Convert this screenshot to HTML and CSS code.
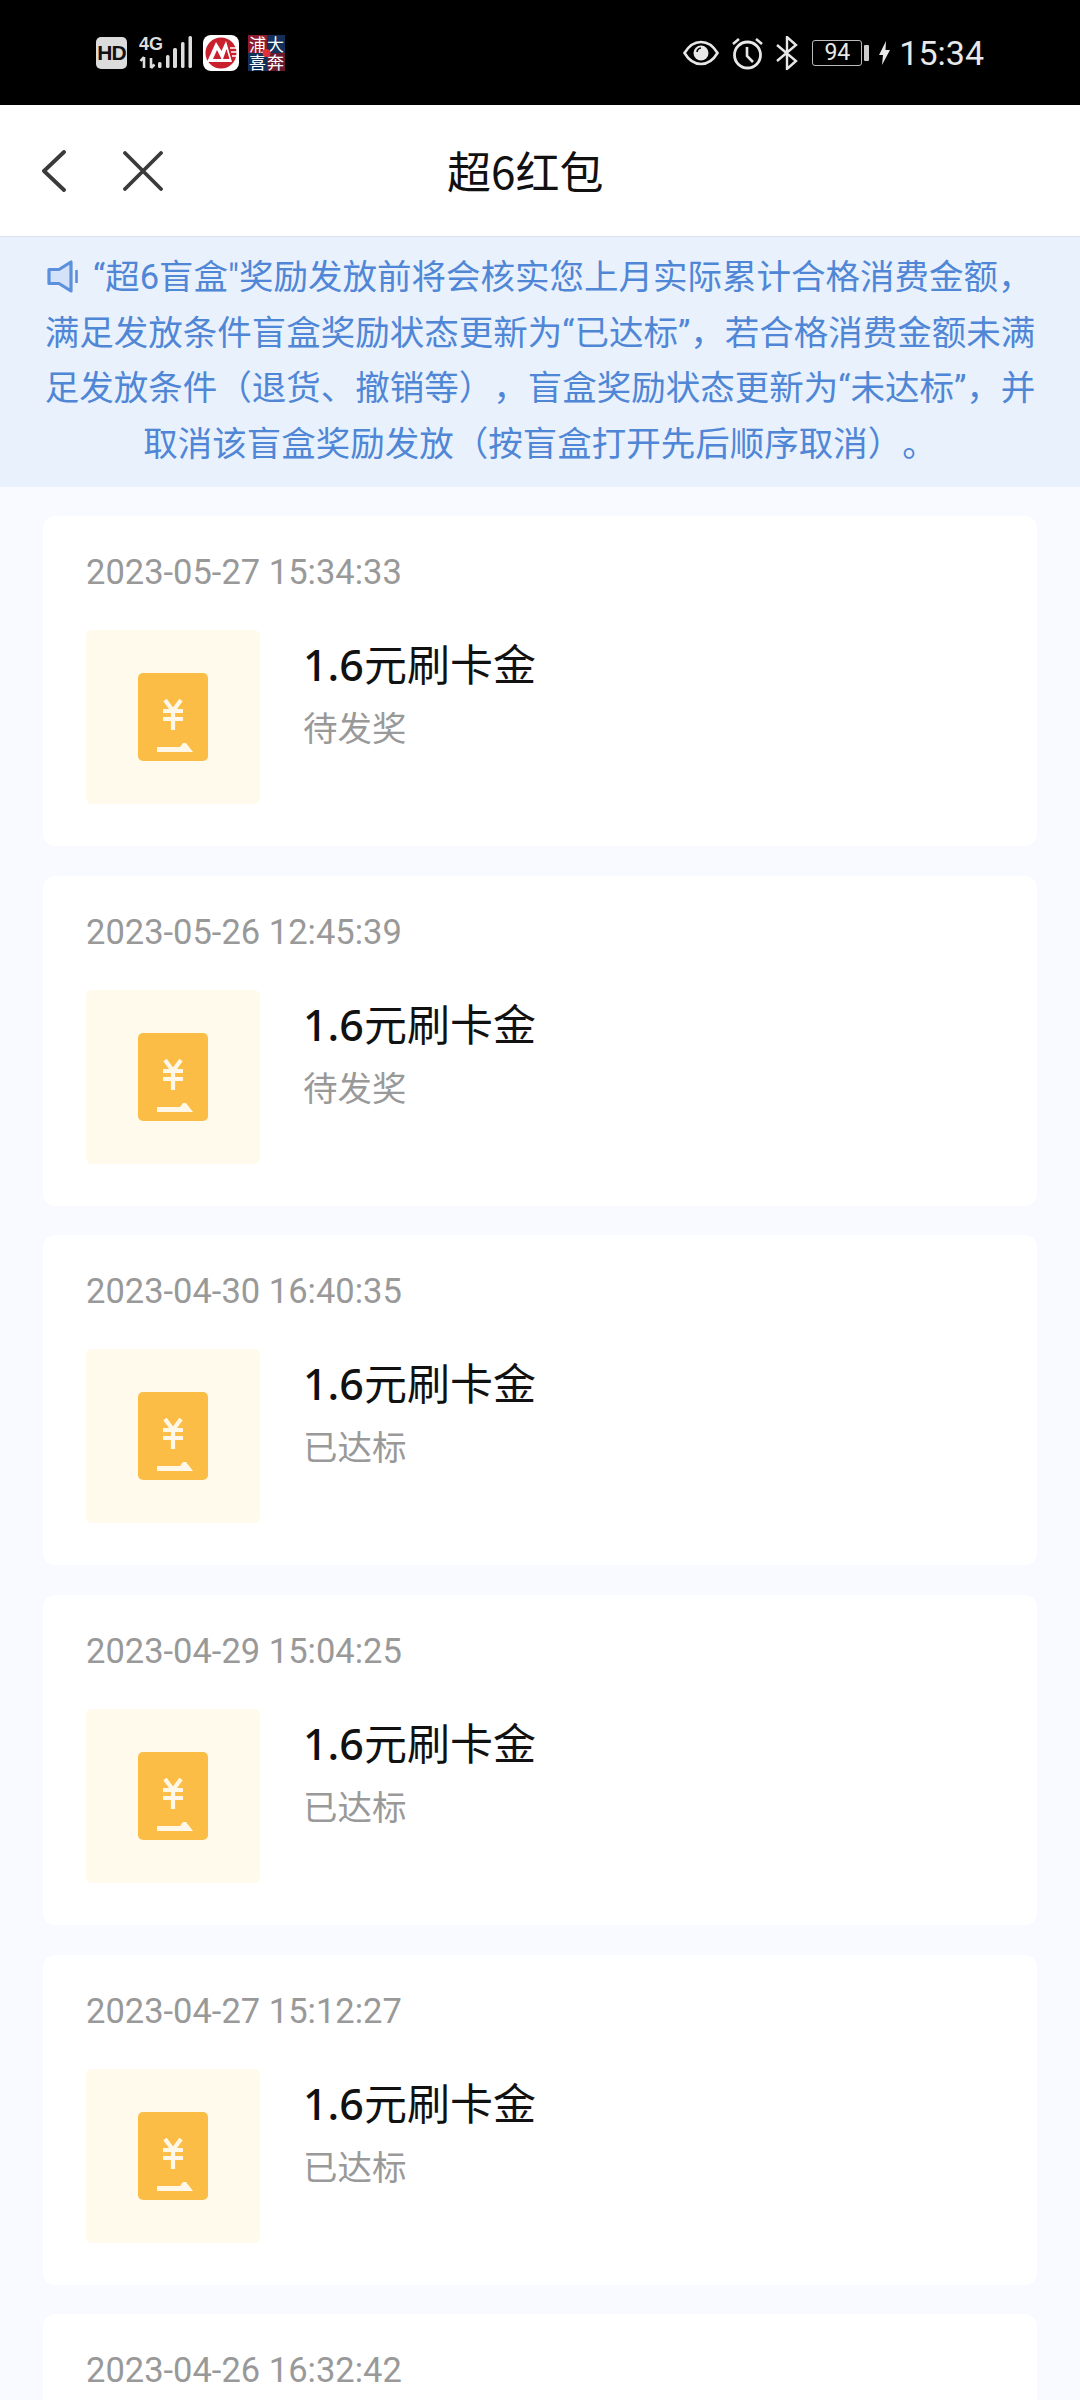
FILE: index.html
```html
<!DOCTYPE html>
<html lang="zh-CN">
<head>
<meta charset="utf-8">
<title>超6红包</title>
<link rel="stylesheet" href="styles.css">
</head>
<body>
<div class="page">
  <header class="status">
    <div class="status-left">
      <span class="hd">HD</span>
      <svg class="signal" width="54" height="33" viewBox="0 0 54 33">
        <text x="0" y="14" class="net">4G</text>
        <path d="M5 32V21M1.500 25l3.500-4M12 22v10M12 32l3.500-3.500" stroke="#ddd" stroke-width="2.600" fill="none"/>
        <g fill="#ddd"><rect x="19" y="26" width="3.500" height="6" rx="1.500"/><rect x="27" y="19" width="3.500" height="13" rx="1.500"/><rect x="34" y="12" width="4" height="20" rx="1.500"/><rect x="42" y="6" width="3.500" height="26" rx="1.500"/><rect x="49.500" y="0" width="3.500" height="32" rx="1.500"/></g>
      </svg>
      <svg class="cmb" width="36" height="36" viewBox="0 0 36 36">
        <rect width="36" height="36" rx="8" fill="#fff"/>
        <circle cx="18" cy="18" r="15.500" fill="#c8202d"/>
        <path d="M4 27L13 7l5.500 9L23 6l6 21z" fill="#fff"/>
        <path d="M10 24l4-9 4.500 9zM20 24l3.500-10 3 10z" fill="#c8202d"/>
        <path d="M27 13h7M28 17h6M29 21h5" stroke="#fff" stroke-width="1.300"/>
      </svg>
      <svg class="pufa" width="37" height="36" viewBox="0 0 37 36">
        <rect width="19" height="18" fill="#8c1c2c"/>
        <rect x="19" width="18" height="18" fill="#13305a"/>
        <rect y="18" width="19" height="18" fill="#13305a"/>
        <rect x="19" y="18" width="18" height="18" fill="#6a1a2c"/>
        <text x="1" y="16" class="pf">浦</text>
        <text x="19" y="16" class="pf">大</text>
        <text x="1" y="34" class="pf">喜</text>
        <text x="19" y="34" class="pf">奔</text>
        <circle cx="18.500" cy="18" r="4" fill="#e0303a"/>
      </svg>
    </div>
    <div class="status-right">
      <svg class="eye" width="36" height="26" viewBox="0 0 36 26">
        <path d="M1.500 13C6 5.500 11.500 2 18 2s12 3.500 16.500 11C30 20.500 24.500 24 18 24S6 20.500 1.500 13z" fill="none" stroke="#e8e8e8" stroke-width="2.600"/>
        <circle cx="18" cy="13" r="7.500" fill="#e8e8e8"/>
        <path d="M14 12a4.500 4.500 0 0 1 4-4" stroke="#000" stroke-width="1.600" fill="none"/>
      </svg>
      <svg class="alarm" width="33" height="34" viewBox="0 0 33 34">
        <circle cx="16.500" cy="19" r="13" fill="none" stroke="#e8e8e8" stroke-width="2.800"/>
        <path d="M16 11v9l6 6M2 8l6-5M31 8l-6-5" fill="none" stroke="#e8e8e8" stroke-width="2.600"/>
      </svg>
      <svg class="bt" width="22" height="34" viewBox="0 0 22 34">
        <path d="M1 9l19 16-9 8V1l9 8L1 25" fill="none" stroke="#e8e8e8" stroke-width="2.400"/>
      </svg>
      <div class="battery"><span class="batt-box">94</span><span class="batt-nub"></span></div>
      <svg class="bolt" width="13" height="24" viewBox="0 0 13 24">
        <path d="M8 0L1 14h4l-1 10 8-15H7.500z" fill="#e8e8e8"/>
      </svg>
      <span class="clock">15:34</span>
    </div>
  </header>

  <nav class="nav">
    <svg class="back" width="24" height="42" viewBox="0 0 24 42">
      <path d="M22 2L2 21l20 19" fill="none" stroke="#3a3a3a" stroke-width="3.800" stroke-linecap="round" stroke-linejoin="round"/>
    </svg>
    <svg class="close" width="40" height="40" viewBox="0 0 40 40">
      <path d="M2 2l36 36M38 2L2 38" fill="none" stroke="#3a3a3a" stroke-width="3.800" stroke-linecap="round"/>
    </svg>
    <h1 class="title">超6红包</h1>
  </nav>

  <section class="notice">
    <svg class="horn" width="31" height="33" viewBox="0 0 31 33">
      <path d="M2 9.500h10L24 2v29l-12-7.500H2z" fill="#d3e2f8" stroke="#5c8fdc" stroke-width="3.200" stroke-linejoin="round"/>
      <path d="M29.500 10v13" stroke="#5c8fdc" stroke-width="2.600"/>
    </svg>
    “超6盲盒"奖励发放前将会核实您上月实际累计合格消费金额，<br>满足发放条件盲盒奖励状态更新为“已达标”，若合格消费金额未满<br>足发放条件（退货、撤销等），盲盒奖励状态更新为“未达标”，并<br>取消该盲盒奖励发放（按盲盒打开先后顺序取消）。
  </section>

  <main class="list">
    <article class="card">
      <time class="date">2023-05-27 15:34:33</time>
      <div class="row">
        <div class="thumb"><svg class="ticket" width="70" height="88" viewBox="0 0 70 88"><use href="#ticket"/></svg></div>
        <div class="info"><div class="name"><b>1.6</b>元刷卡金</div><div class="state">待发奖</div></div>
      </div>
    </article>
    <article class="card">
      <time class="date">2023-05-26 12:45:39</time>
      <div class="row">
        <div class="thumb"><svg class="ticket" width="70" height="88" viewBox="0 0 70 88"><use href="#ticket"/></svg></div>
        <div class="info"><div class="name"><b>1.6</b>元刷卡金</div><div class="state">待发奖</div></div>
      </div>
    </article>
    <article class="card">
      <time class="date">2023-04-30 16:40:35</time>
      <div class="row">
        <div class="thumb"><svg class="ticket" width="70" height="88" viewBox="0 0 70 88"><use href="#ticket"/></svg></div>
        <div class="info"><div class="name"><b>1.6</b>元刷卡金</div><div class="state">已达标</div></div>
      </div>
    </article>
    <article class="card">
      <time class="date">2023-04-29 15:04:25</time>
      <div class="row">
        <div class="thumb"><svg class="ticket" width="70" height="88" viewBox="0 0 70 88"><use href="#ticket"/></svg></div>
        <div class="info"><div class="name"><b>1.6</b>元刷卡金</div><div class="state">已达标</div></div>
      </div>
    </article>
    <article class="card">
      <time class="date">2023-04-27 15:12:27</time>
      <div class="row">
        <div class="thumb"><svg class="ticket" width="70" height="88" viewBox="0 0 70 88"><use href="#ticket"/></svg></div>
        <div class="info"><div class="name"><b>1.6</b>元刷卡金</div><div class="state">已达标</div></div>
      </div>
    </article>
    <article class="card">
      <time class="date">2023-04-26 16:32:42</time>
    </article>
  </main>
</div>
<svg class="defs" width="0" height="0">
  <defs>
    <g id="ticket">
      <rect width="70" height="88" rx="5" fill="#fbbd45"/>
      <path d="M27 27l8 11 8-11M25 38h20M25 46h20M35 38v19" fill="none" stroke="#fff8e8" stroke-width="4.200"/>
      <path d="M19 79v-5h23l3-4h3l7 9z" fill="#fff8e8"/>
    </g>
  </defs>
</svg>
</body>
</html>
```
FILE: styles.css
```css
* { box-sizing: border-box; }
html, body { margin: 0; padding: 0; }
body {
  width: 1080px;
  height: 2400px;
  overflow: hidden;
  background: #f8faff;
  font-family: "Noto Sans CJK SC", "Noto Sans", sans-serif;
}
.page { width: 1080px; height: 2400px; overflow: hidden; }
.defs { display: block; }

.status {
  height: 105px;
  background: #000;
  display: flex;
  justify-content: space-between;
  align-items: center;
  padding: 0 96px 0 96px;
}
.status-left, .status-right { display: flex; align-items: center; }
.status-right { height: 36px; }
.hd {
  width: 31px;
  height: 32px;
  border-radius: 5px;
  background: #dcdcdc;
  color: #111;
  font: 700 21px/32px "Liberation Sans", sans-serif;
  text-align: center;
  letter-spacing: -1px;
}
.signal { margin-left: 12px; overflow: visible; }
.net { font: 700 18px "Liberation Sans", sans-serif; fill: #ddd; }
.cmb { margin-left: 10px; }
.pufa { margin-left: 9px; overflow: visible; }
.pf { font-size: 17px; fill: #fff; }

.eye { margin-right: 12px; }
.alarm { margin-right: 12px; }
.bt { margin-right: 14px; }
.battery { display: flex; align-items: center; margin-right: 9px; }
.batt-box {
  width: 50px;
  height: 26px;
  border: 1.500px solid #bbb;
  border-radius: 3px;
  color: #e8e8e8;
  font: 400 23px/23px Roboto, sans-serif;
  text-align: center;
}
.batt-nub {
  width: 5px;
  height: 16px;
  margin-left: 2px;
  background: #ccc;
  border-radius: 1px;
}
.bolt { margin-right: 8px; }
.clock {
  color: #e8e8e8;
  font: 400 34px/36px Roboto, sans-serif;
}

.nav {
  height: 132px;
  background: #fff;
  border-bottom: 1px solid #dde3ec;
  display: flex;
  align-items: center;
  padding-left: 42px;
}
.close { margin-left: 57px; }
.title {
  margin: -2px 0 0 284px;
  font-size: 44px;
  line-height: 60px;
  font-weight: 400;
  color: #111;
}

.notice {
  height: 250px;
  background: #e8f1fc;
  color: #4f86d6;
  font-family: Roboto, "Noto Sans CJK SC", sans-serif;
  font-size: 34.500px;
  line-height: 55.500px;
  text-align: center;
  padding-top: 13px;
  white-space: nowrap;
  text-spacing-trim: space-all;
}
.horn { vertical-align: -4px; margin-right: 6px; }

.list {
  display: flex;
  flex-direction: column;
  gap: 29.700px;
  padding: 29px 43px 0;
}
.card {
  flex: none;
  height: 330px;
  background: #fff;
  border-radius: 12px;
  padding: 31px 43px 0;
}
.date {
  display: block;
  color: #999;
  font: 400 34.500px/50px Roboto, sans-serif;
}
.row { display: flex; margin-top: 33px; }
.thumb {
  width: 174px;
  height: 174px;
  background: #fffaeb;
  border-radius: 6px;
  display: flex;
  align-items: center;
  justify-content: center;
}
.info { margin-left: 43px; padding-top: 2px; }
.name {
  font-size: 43px;
  line-height: 60px;
  color: #111;
}
.name b { font-family: "Noto Sans", sans-serif; font-weight: 500; }
.state {
  color: #999;
  font-size: 34.500px;
  line-height: 50px;
  margin-top: 6px;
}
```
